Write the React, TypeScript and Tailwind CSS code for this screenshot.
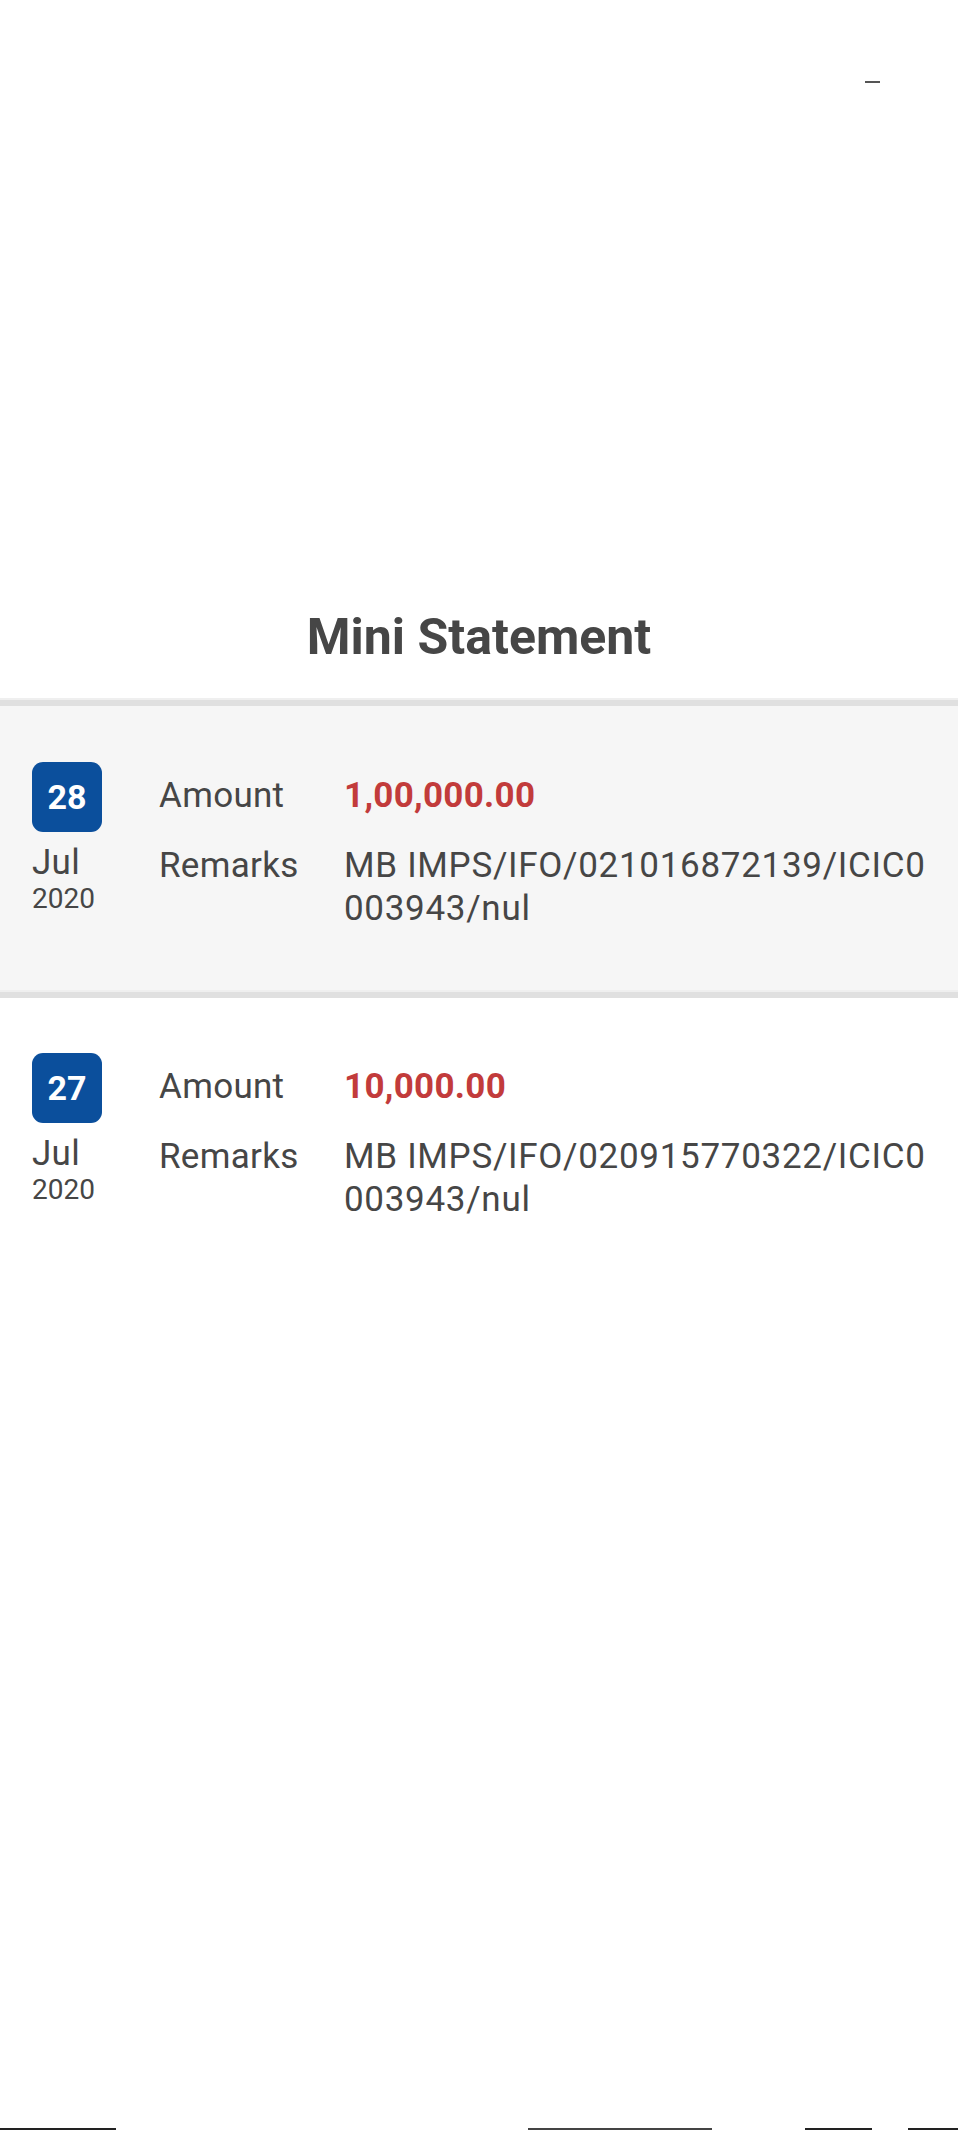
const transactions = [
  {
    day: '28',
    month: 'Jul',
    year: '2020',
    amount: '1,00,000.00',
    remarks: ['MB IMPS/IFO/021016872139/ICIC0', '003943/nul'],
    shaded: true,
  },
  {
    day: '27',
    month: 'Jul',
    year: '2020',
    amount: '10,000.00',
    remarks: ['MB IMPS/IFO/020915770322/ICIC0', '003943/nul'],
    shaded: false,
  },
];

function Divider() {
  return (
    <div>
      <div className="h-[2px] bg-[#efefef]" />
      <div className="h-[6px] bg-[#e0e0e0]" />
    </div>
  );
}

export default function App() {
  return (
    <div className="relative flex min-h-[2130px] w-full flex-col bg-white font-['Roboto','Liberation_Sans',sans-serif] text-[#464646]">
      {/* stray mark near top */}
      <div className="absolute left-[865px] top-[81px] h-[2px] w-[15px] bg-[#555]" />

      {/* Heading */}
      <div className="pt-[607px] pb-[31px] text-center">
        <h1 className="text-[50px] leading-[60px] font-bold text-[#464646]">Mini Statement</h1>
      </div>

      {transactions.map((t, i) => (
        <div key={i}>
          <Divider />
          <div className={`flex pl-[32px] pr-[20px] ${t.shaded ? 'bg-[#f6f6f6] pt-[56px] pb-[60px]' : 'bg-white pt-[55px] pb-[40px]'}`}>
            {/* Date */}
            <div className="w-[127px] shrink-0">
              <div className="flex h-[70px] w-[70px] items-center justify-center rounded-[11px] bg-[#0b4f9c]">
                <span className="text-[34px] font-bold leading-none text-white">{t.day}</span>
              </div>
              <div className="mt-[11px] text-[35px] leading-[40px] tracking-[0.3px]">{t.month}</div>
              <div className="text-[28px] leading-[32px]">{t.year}</div>
            </div>

            {/* Details */}
            <div className="pt-[12px] text-[35px] leading-[43px] tracking-[0.3px]">
              <div className="flex">
                <div className="w-[185px] shrink-0">Amount</div>
                <div className="font-bold text-[#c23b3b]">{t.amount}</div>
              </div>
              <div className="mt-[27px] flex">
                <div className="w-[185px] shrink-0">Remarks</div>
                <div className="tracking-[0.7px]">
                  {t.remarks.map((line, j) => (
                    <div key={j} className="whitespace-nowrap">{line}</div>
                  ))}
                </div>
              </div>
            </div>
          </div>
        </div>
      ))}

      <div className="flex-1" />

      {/* bottom edge */}
      <div className="flex h-[2px]">
        <div className="w-[116px] bg-[#222]" />
        <div className="w-[412px]" />
        <div className="w-[184px] bg-[#444]" />
        <div className="w-[93px]" />
        <div className="w-[67px] bg-[#222]" />
        <div className="w-[36px]" />
        <div className="flex-1 bg-[#222]" />
      </div>
    </div>
  );
}
